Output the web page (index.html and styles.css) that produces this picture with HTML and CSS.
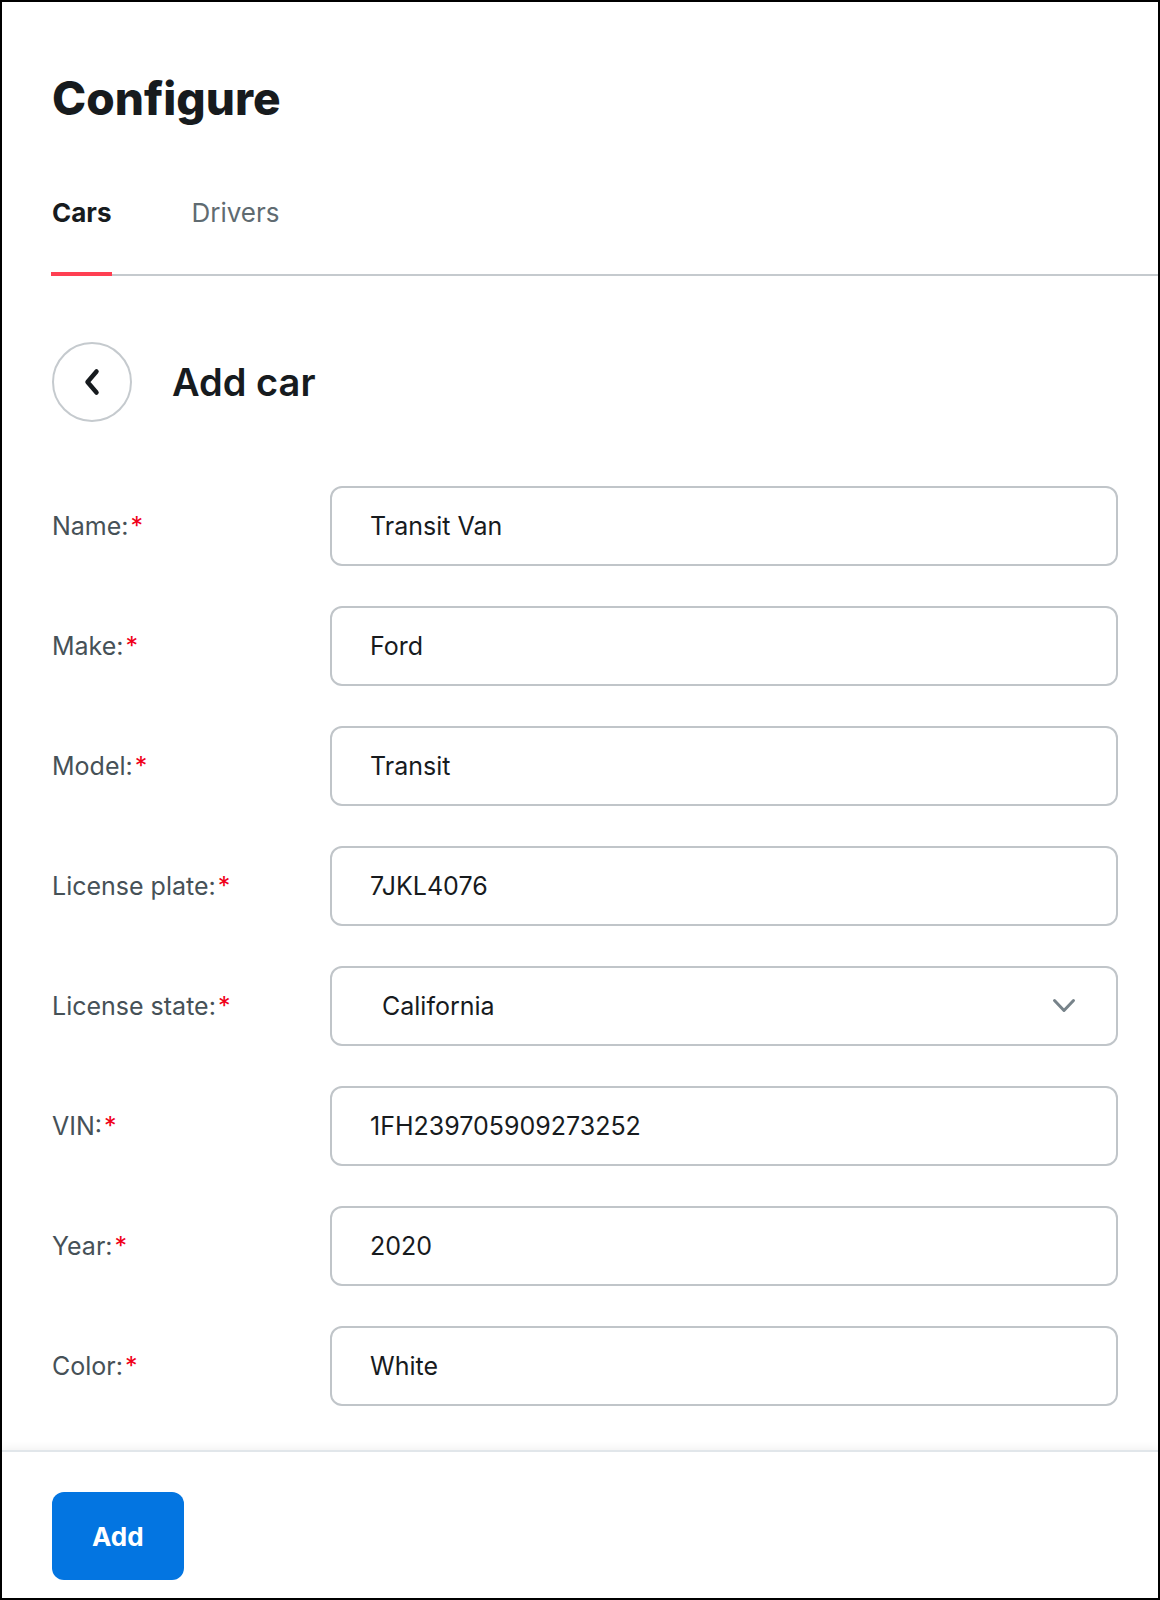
FILE: index.html
```html
<!DOCTYPE html>
<html lang="en">
<head>
  <meta charset="utf-8">
  <title>Configure - Add car</title>
  <meta name="viewport" content="width=device-width, initial-scale=1">
  <link rel="stylesheet" href="styles.css">
</head>
<body>
  <header>
    <h1>Configure</h1>
    <nav class="tabs">
      <a href="#cars" class="active">Cars</a>
      <a href="#drivers">Drivers</a>
    </nav>
  </header>

  <main>
    <div class="title-row">
      <button type="button" class="back" aria-label="Back">
        <svg width="16" height="28" viewBox="0 0 16 28" fill="none" stroke="currentColor" stroke-width="4.5" stroke-linecap="round" stroke-linejoin="round">
          <path d="M12.5 3.5 L3.5 14 L12.5 24.5"/>
        </svg>
      </button>
      <h2>Add car</h2>
    </div>

    <form id="carForm">
      <div class="field">
        <label for="name">Name:<span class="required">*</span></label>
        <input type="text" id="name" value="Transit Van" required>
      </div>
      <div class="field">
        <label for="make">Make:<span class="required">*</span></label>
        <input type="text" id="make" value="Ford" required>
      </div>
      <div class="field">
        <label for="model">Model:<span class="required">*</span></label>
        <input type="text" id="model" value="Transit" required>
      </div>
      <div class="field">
        <label for="plate">License plate:<span class="required">*</span></label>
        <input type="text" id="plate" value="7JKL4076" required>
      </div>
      <div class="field">
        <label for="state">License state:<span class="required">*</span></label>
        <div class="select">
          <select id="state" required>
            <option>Arizona</option>
            <option selected>California</option>
            <option>Nevada</option>
            <option>Oregon</option>
          </select>
          <svg width="24" height="16" viewBox="0 0 24 16" fill="none" stroke="currentColor" stroke-width="3" stroke-linecap="round" stroke-linejoin="round">
            <path d="M2.5 2.5 L12 12.5 L21.5 2.5"/>
          </svg>
        </div>
      </div>
      <div class="field">
        <label for="vin">VIN:<span class="required">*</span></label>
        <input type="text" id="vin" value="1FH239705909273252" required>
      </div>
      <div class="field">
        <label for="year">Year:<span class="required">*</span></label>
        <input type="text" inputmode="numeric" id="year" value="2020" required>
      </div>
      <div class="field">
        <label for="color">Color:<span class="required">*</span></label>
        <input type="text" id="color" value="White" required>
      </div>
    </form>
  </main>

  <footer>
    <button type="submit" form="carForm" class="add">Add</button>
  </footer>
</body>
</html>
```
FILE: styles.css
```css
*, *::before, *::after {
  box-sizing: border-box;
  margin: 0;
  padding: 0;
}

body {
  display: flex;
  flex-direction: column;
  min-height: 100vh;
  border: 2px solid #000000;
  background: #ffffff;
  color: #171b1e;
  font-family: Inter, sans-serif;
  font-size: 25px;
}

header {
  padding: 68px 0 0 50px;
}

h1 {
  font-size: 46px;
  line-height: 56px;
  font-weight: 800;
}

.tabs {
  display: flex;
  gap: 78px;
  margin: 70px 0 0 -1px;
  box-shadow: inset 0 -2px #c5cace;
}

.tabs a {
  padding: 0 1px 42px;
  border-bottom: 4px solid transparent;
  color: #606b71;
  font-size: 26px;
  line-height: 34px;
  text-decoration: none;
}

.tabs .active {
  border-color: #ff3f52;
  color: #171b1e;
  font-weight: bold;
}

main {
  flex: 1;
  padding: 66px 40px 44px 50px;
}

.title-row {
  display: flex;
  align-items: center;
  gap: 40px;
  margin-bottom: 64px;
}

.back {
  display: flex;
  align-items: center;
  justify-content: center;
  width: 80px;
  height: 80px;
  border: 2px solid #c5cace;
  border-radius: 50%;
  background: #ffffff;
  color: #171b1e;
  cursor: pointer;
}

h2 {
  font-size: 38px;
  line-height: 48px;
  font-weight: 600;
}

form {
  display: grid;
  gap: 40px;
}

.field {
  display: grid;
  grid-template-columns: 278px 1fr;
  align-items: center;
}

label {
  color: #465157;
}

.required {
  margin-left: 2px;
  color: #f00018;
}

input, select {
  width: 100%;
  height: 80px;
  padding: 0 38px;
  border: 2px solid #c0c5c9;
  border-radius: 12px;
  background: #ffffff;
  color: #171b1e;
  font: inherit;
}

.select {
  position: relative;
}

select {
  display: block;
  padding-left: 50px;
  appearance: none;
}

/* arrow sits on top of the select */
.select svg {
  position: absolute;
  top: 32px;
  right: 42px;
  color: #77838a;
  pointer-events: none;
}

footer {
  padding: 40px 50px 18px;
  border-top: 2px solid #e1e6ea;
  box-shadow: 0 -2px 8px rgba(0, 0, 0, 0.06);
}

.add {
  height: 88px;
  padding: 0 40px;
  border: none;
  border-radius: 12px;
  background: #0375e1;
  color: #ffffff;
  font: inherit;
  font-size: 26px;
  font-weight: bold;
  cursor: pointer;
}
```
